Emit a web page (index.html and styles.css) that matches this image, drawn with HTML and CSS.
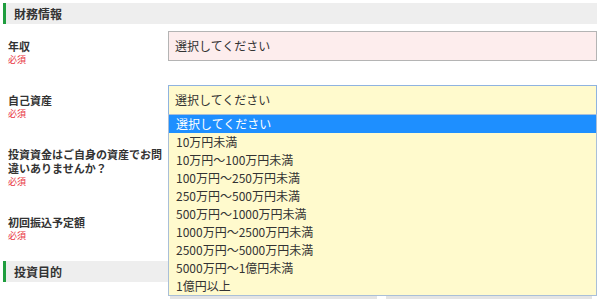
FILE: index.html
```html
<!DOCTYPE html>
<html lang="ja">
<head>
<meta charset="utf-8">
<title>財務情報</title>
<link rel="stylesheet" href="styles.css">
</head>
<body>
<div class="page">
  <h2 class="section-head">財務情報</h2>

  <div class="row">
    <div class="label"><div class="label-title">年収</div><div class="req">必須</div></div>
    <div class="field"><div class="select select-error">選択してください</div></div>
  </div>

  <div class="row">
    <div class="label"><div class="label-title">自己資産</div><div class="req">必須</div></div>
    <div class="field">
      <div class="select select-open">選択してください</div>
      <ul class="dropdown">
        <li class="opt opt-active">選択してください</li>
        <li class="opt">10万円未満</li>
        <li class="opt">10万円～100万円未満</li>
        <li class="opt">100万円～250万円未満</li>
        <li class="opt">250万円～500万円未満</li>
        <li class="opt">500万円～1000万円未満</li>
        <li class="opt">1000万円～2500万円未満</li>
        <li class="opt">2500万円～5000万円未満</li>
        <li class="opt">5000万円～1億円未満</li>
        <li class="opt">1億円以上</li>
      </ul>
    </div>
  </div>

  <div class="row">
    <div class="label"><div class="label-title">投資資金はご自身の資産でお問違いありませんか？</div><div class="req">必須</div></div>
    <div class="field"></div>
  </div>

  <div class="row">
    <div class="label"><div class="label-title">初回振込予定額</div><div class="req">必須</div></div>
    <div class="field"></div>
  </div>

  <h2 class="section-head">投資目的</h2>

  <div class="boxes">
    <div class="box"></div>
    <div class="box"></div>
  </div>
</div>
</body>
</html>
```

FILE: styles.css
```css
html, body {
  margin: 0;
  padding: 0;
  background: #fff;
  overflow: hidden;
}
body {
  font-family: "Noto Sans CJK JP", "Noto Sans", sans-serif;
  color: #333;
}
.page {
  padding: 3px 3px 0 3px;
  height: 296px;
  overflow: hidden;
}
.section-head {
  margin: 0;
  height: 21px;
  line-height: 21px;
  background: #eeeeee;
  border-left: 3px solid #1f9d3e;
  padding-left: 8px;
  font-size: 12px;
  font-weight: bold;
  color: #333;
}
.page > .section-head + .row {
  margin-top: 7px;
}
.row {
  display: flex;
  margin-bottom: 18px;
}
.label {
  width: 165px;
  flex: none;
  box-sizing: border-box;
  padding: 8px 0 0 5px;
}
.label-title {
  font-size: 11px;
  line-height: 14px;
  font-weight: bold;
  color: #333;
  width: 156px;
}
.req {
  font-size: 9px;
  line-height: 14px;
  color: #e8323c;
}
.field {
  position: relative;
  width: 429px;
  flex: none;
}
.select {
  box-sizing: border-box;
  height: 30px;
  line-height: 28px;
  border: 1px solid #b4b4b4;
  padding-left: 6px;
  font-size: 12px;
  color: #333;
}
.select-error {
  background: #fdeded;
}
.select-open {
  background: #fffacd;
  border-color: #8fb3e0;
}
.dropdown {
  position: absolute;
  left: 0;
  top: 29px;
  width: 429px;
  box-sizing: border-box;
  margin: 0;
  padding: 0;
  list-style: none;
  background: #fffacd;
  border: 1px solid #a9bfd8;
  z-index: 10;
}
.opt {
  height: 18px;
  line-height: 18px;
  padding-left: 7px;
  font-size: 12px;
  color: #333;
  white-space: nowrap;
}
.opt-active {
  background: #1e8fff;
  color: #fff;
}
.boxes {
  display: flex;
  gap: 9px;
  margin: 13px 0 0 167px;
}
.box {
  height: 20px;
  background: #e4e4e4;
}
.box:first-child {
  width: 207px;
}
.box:last-child {
  width: 206px;
}
```
